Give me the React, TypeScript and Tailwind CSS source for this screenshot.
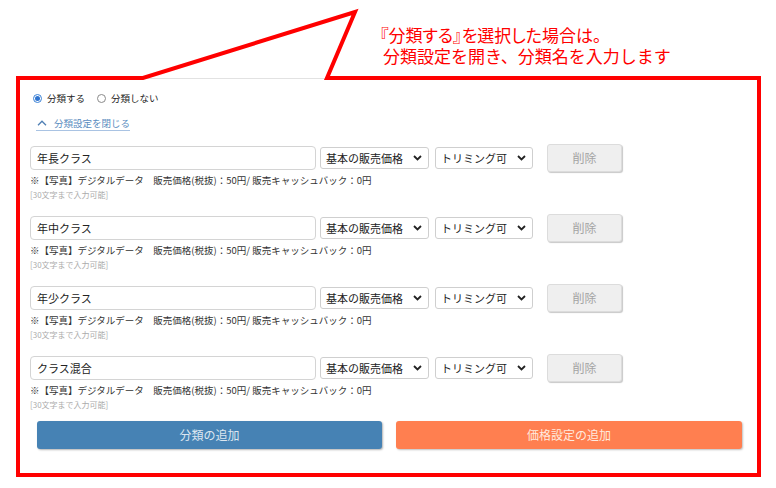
import React from 'react';

const jp = { fontFamily: '"Noto Sans CJK JP", "Noto Sans", sans-serif' };

const rows = ['年長クラス', '年中クラス', '年少クラス', 'クラス混合'];

function Chevron() {
  return (
    <svg width="9" height="6" viewBox="0 0 9 6" className="shrink-0">
      <path d="M1 1l3.5 3.5L8 1" fill="none" stroke="#222" strokeWidth="1.8" />
    </svg>
  );
}

function FakeSelect({ label, width }: { label: string; width: string }) {
  return (
    <div
      className={`${width} h-[22px] flex items-center justify-between pl-[5px] pr-[6px] border border-[#cfcfcf] rounded-[3px] bg-white text-[11px] text-[#222]`}
    >
      <span>{label}</span>
      <Chevron />
    </div>
  );
}

function CategoryRow({ name }: { name: string }) {
  return (
    <div className="flex flex-col">
      <div className="flex items-center h-[28px]">
        <div className="w-[286px] h-[24px] flex items-center px-[6px] border border-[#d4d4d4] rounded-[4px] bg-white text-[11px] text-[#222]">
          {name}
        </div>
        <div className="ml-[4px]">
          <FakeSelect label="基本の販売価格" width="w-[109px]" />
        </div>
        <div className="ml-[6px]">
          <FakeSelect label="トリミング可" width="w-[98px]" />
        </div>
        <button
          type="button"
          className="ml-[14px] w-[75px] h-[28px] bg-[#efefef] border border-[#dcdcdc] rounded-[3px] shadow-[1px_1px_1px_rgba(0,0,0,0.22)] text-[12px] text-[#a3a3a3]"
        >
          削除
        </button>
      </div>
      <p className="mt-[1px] h-[14px] leading-[14px] text-[9.5px] text-[#333] whitespace-nowrap">
        ※【写真】デジタルデータ　販売価格(税抜)：50円/ 販売キャッシュバック：0円
      </p>
      <p className="mt-[2px] h-[12px] leading-[12px] text-[8px] text-[#ababab]">[30文字まで入力可能]</p>
    </div>
  );
}

export default function App() {
  return (
    <div className="relative w-[776px] h-[488px] bg-white overflow-hidden" style={jp}>
      <div className="h-[78px] pl-[380px] pt-[24px] text-[17px] leading-[21px] text-[#f00]">
        <p className="[font-feature-settings:'palt']">『分類する』を選択した場合は。</p>
        <p className="pl-[3px]">分類設定を開き、分類名を入力します</p>
      </div>

      <div className="ml-[16px] w-[745px] h-[399px] border-x-4 border-b-4 border-x-[#f00] border-b-[#f00] border-t border-t-[#e2e2e2] pl-[10px]">
        <div className="mt-[12px] ml-[3px] h-[14px] flex items-center text-[9.5px] text-[#222]">
          <span className="w-[9px] h-[9px] rounded-full border border-[#3b82d6] flex items-center justify-center">
            <span className="w-[5px] h-[5px] rounded-full bg-[#2f74d0]" />
          </span>
          <span className="ml-[5px]">分類する</span>
          <span className="ml-[12px] w-[9px] h-[9px] rounded-full border border-[#8a8a8a]" />
          <span className="ml-[5px]">分類しない</span>
        </div>

        <div className="mt-[12px] ml-[6px] flex">
          <a className="flex items-center h-[14px] pb-[1px] border-b border-[#a9c3e3] text-[9.5px] text-[#5a8cc0]">
            <svg width="10" height="6" viewBox="0 0 10 6" className="ml-[1px]">
              <path d="M1 5.2L5 1.2l4 4" fill="none" stroke="#4f7fb4" strokeWidth="1.3" />
            </svg>
            <span className="ml-[7px]">分類設定を閉じる</span>
          </a>
        </div>

        <div className="mt-[13px] flex flex-col gap-[13px]">
          {rows.map((r) => (
            <CategoryRow key={r} name={r} />
          ))}
        </div>

        <div className="mt-[10px] ml-[7px] flex gap-[14px]">
          <button
            type="button"
            className="w-[345px] h-[28px] rounded-[3px] bg-[#4682b4] shadow-[1px_1px_2px_rgba(0,0,0,0.3)] text-[12px] text-[#dce6f0]"
          >
            分類の追加
          </button>
          <button
            type="button"
            className="w-[346px] h-[28px] rounded-[3px] bg-[#ff7f50] shadow-[1px_1px_2px_rgba(0,0,0,0.25)] text-[12px] text-[#ffeadf]"
          >
            価格設定の追加
          </button>
        </div>
      </div>

      <svg className="absolute left-0 top-0 pointer-events-none" width="776" height="90" viewBox="0 0 776 90">
        <polyline
          points="16,78 143,78 355,12 327,78 761,78"
          fill="none"
          stroke="#f00"
          strokeWidth="4"
          strokeLinejoin="miter"
          strokeMiterlimit="10"
        />
      </svg>
    </div>
  );
}
